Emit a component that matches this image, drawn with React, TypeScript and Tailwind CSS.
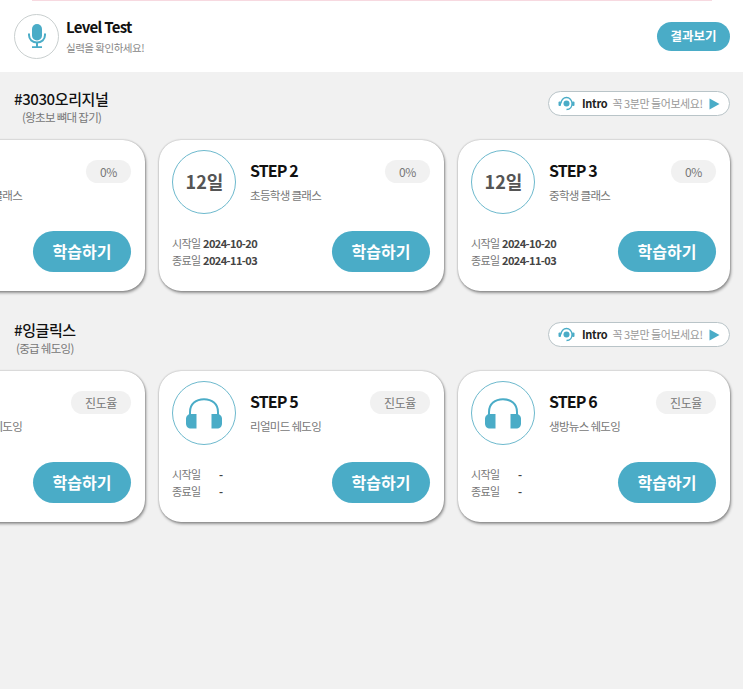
import React from "react";

const Headset = () => (
  <svg width="36" height="31" viewBox="0 0 36 31" fill="none">
    <path d="M4 18V14C4 6 10 1.200 18 1.200S32 6 32 14V18" stroke="#4aacc7" strokeWidth="2" />
    <path d="M10.500 16V30.500H5C2 30.500 0 28.500 0 25.500V21C0 18 2 16 5 16H10.500Z" fill="#4aacc7" />
    <path d="M25.500 16V30.500H31C34 30.500 36 28.500 36 25.500V21C36 18 34 16 31 16H25.500Z" fill="#4aacc7" />
  </svg>
);

const Mic = () => (
  <svg width="18" height="24" viewBox="0 0 18 24" fill="none">
    <rect x="4" y="0" width="10" height="16.500" rx="5" fill="#4aacc7" />
    <path d="M1 9.500V11C1 15.500 4.500 18.500 9 18.500S17 15.500 17 11V9.500" stroke="#4aacc7" strokeWidth="2" />
    <path d="M9 18V23M4 23.200H14" stroke="#4aacc7" strokeWidth="2" />
  </svg>
);

const IntroIcon = () => (
  <svg width="17" height="17" viewBox="0 0 17 17" fill="none">
    <path d="M3 8.500C3 5 5.500 2.500 8.500 2.500S14 5 14 8.500C14 12 12 14.500 8.500 14.500" stroke="#4aacc7" strokeWidth="1.300" />
    <circle cx="8.500" cy="8.500" r="3" fill="#4aacc7" />
    <rect x="0.500" y="6.500" width="2.500" height="4.500" rx="1" fill="#4aacc7" />
    <rect x="14" y="6.500" width="2.500" height="4.500" rx="1" fill="#4aacc7" />
  </svg>
);

const IntroPill = () => (
  <div className="flex h-[25px] w-[182px] items-center rounded-full border border-[#b9c4c8] bg-white pl-[9px]">
    <IntroIcon />
    <span className="ml-[7px] text-[11px] font-bold tracking-[-0.3px] text-[#222]">Intro</span>
    <span className="ml-[5px] whitespace-nowrap text-[11px] tracking-[-0.45px] text-[#999]">꼭 3분만 들어보세요!</span>
    <svg className="ml-[6px]" width="11" height="12" viewBox="0 0 11 12"><path d="M0.500 0.500L10.500 6L0.500 11.500Z" fill="#4aacc7" /></svg>
  </div>
);

type CardProps = {
  width: string;
  step: string;
  sub: string;
  badge: string;
  start: string;
  end: string;
  days?: boolean;
};

const Card = ({ width, step, sub, badge, start, end, days }: CardProps) => (
  <div className={`${width} h-[151px] shrink-0 rounded-[22px] bg-white pl-[13px] pr-[14px] pt-[10px] shadow-[1px_2px_3px_rgba(0,0,0,0.38),0_0_2px_rgba(0,0,0,0.32)]`}>
    <div className="flex items-start">
      <div className="flex h-[64px] w-[64px] shrink-0 items-center justify-center rounded-full border border-[#6db9cd]">
        {days ? <span className="pb-[2px] pl-[1px] text-[18px] font-bold text-[#555]">12일</span> : <Headset />}
      </div>
      <div className="ml-[14px] flex-1 pt-[8px]">
        <div className="text-[16px] font-bold leading-[24px] tracking-[-0.9px] text-[#111]">{step}</div>
        <div className="mt-[5px] text-[11.500px] leading-[16px] tracking-[-0.7px] text-[#777]">{sub}</div>
      </div>
      <div className="mt-[10px] flex h-[23px] items-center justify-center rounded-full bg-[#f1f1f1] px-[14px] text-[12px] tracking-[-0.4px] text-[#777]">{badge}</div>
    </div>
    <div className="mt-[17px] flex items-center justify-between">
      <div className="text-[11px] leading-[17px] tracking-[-0.6px] text-[#777]">
        <div className="flex"><span className={days ? "w-[31px]" : "w-[47px]"}>시작일</span><span className="font-semibold text-[#444]">{start}</span></div>
        <div className="flex"><span className={days ? "w-[31px]" : "w-[47px]"}>종료일</span><span className="font-semibold text-[#444]">{end}</span></div>
      </div>
      <div className="flex h-[41px] w-[98px] items-center justify-center rounded-full bg-[#4aacc7] pb-[1px] text-[16px] font-bold text-white">학습하기</div>
    </div>
  </div>
);

const Section = ({ title, sub, subIndent, cards }: { title: string; sub: string; subIndent: string; cards: CardProps[] }) => (
  <section>
    <div className="flex items-start justify-between pl-[14px] pr-[13px]">
      <div>
        <div className="text-[15px] font-medium leading-[20px] tracking-[-0.4px] text-[#111]">{title}</div>
        <div className={`${subIndent} text-[11.500px] leading-[16px] tracking-[-0.7px] text-[#777]`}>{sub}</div>
      </div>
      <div className="mt-[2px]"><IntroPill /></div>
    </div>
    <div className="-ml-[140px] mt-[15px] flex gap-[14px]">
      {cards.map((c) => <Card key={c.step} {...c} />)}
    </div>
  </section>
);

const d = { start: "2024-10-20", end: "2024-11-03", badge: "0%", days: true };
const e = { start: "-", end: "-", badge: "진도율" };

export default function App() {
  return (
    <div className="h-[689px] w-[743px] overflow-hidden bg-[#f1f1f1] font-['Noto_Sans_CJK_KR','Noto_Sans',sans-serif]">
      <header className="relative flex h-[72px] items-center justify-between bg-white pl-[14px] pr-[13px]">
        <div className="absolute left-[32px] top-0 h-px w-[680px] bg-[#f7d9e0]" />
        <div className="flex items-center">
          <div className="flex h-[45px] w-[45px] items-center justify-center rounded-full border border-[#c9cfcf]"><Mic /></div>
          <div className="ml-[7px]">
            <div className="text-[15px] font-bold leading-[20px] tracking-[-0.7px] text-[#111]">Level Test</div>
            <div className="mt-[3px] text-[10.500px] leading-[16px] tracking-[-0.5px] text-[#888]">실력을 확인하세요!</div>
          </div>
        </div>
        <div className="flex h-[29px] w-[73px] items-center justify-center rounded-full bg-[#4aacc7] text-[12.500px] font-bold text-white">결과보기</div>
      </header>
      <div className="pt-[17px]">
        <Section title="#3030오리지널" sub="(왕초보 뼈대 잡기)" subIndent="pl-[8px]" cards={[
          { ...d, width: "w-[285px]", step: "STEP 1", sub: "유치원생 클래스" },
          { ...d, width: "w-[285px]", step: "STEP 2", sub: "초등학생 클래스" },
          { ...d, width: "w-[272px]", step: "STEP 3", sub: "중학생 클래스" },
        ]} />
        <div className="h-[29px]" />
        <Section title="#잉글릭스" sub="(중급 쉐도잉)" subIndent="pl-[2px]" cards={[
          { ...e, width: "w-[285px]", step: "STEP 4", sub: "기초미드 쉐도잉" },
          { ...e, width: "w-[285px]", step: "STEP 5", sub: "리얼미드 쉐도잉" },
          { ...e, width: "w-[272px]", step: "STEP 6", sub: "생방뉴스 쉐도잉" },
        ]} />
      </div>
    </div>
  );
}
